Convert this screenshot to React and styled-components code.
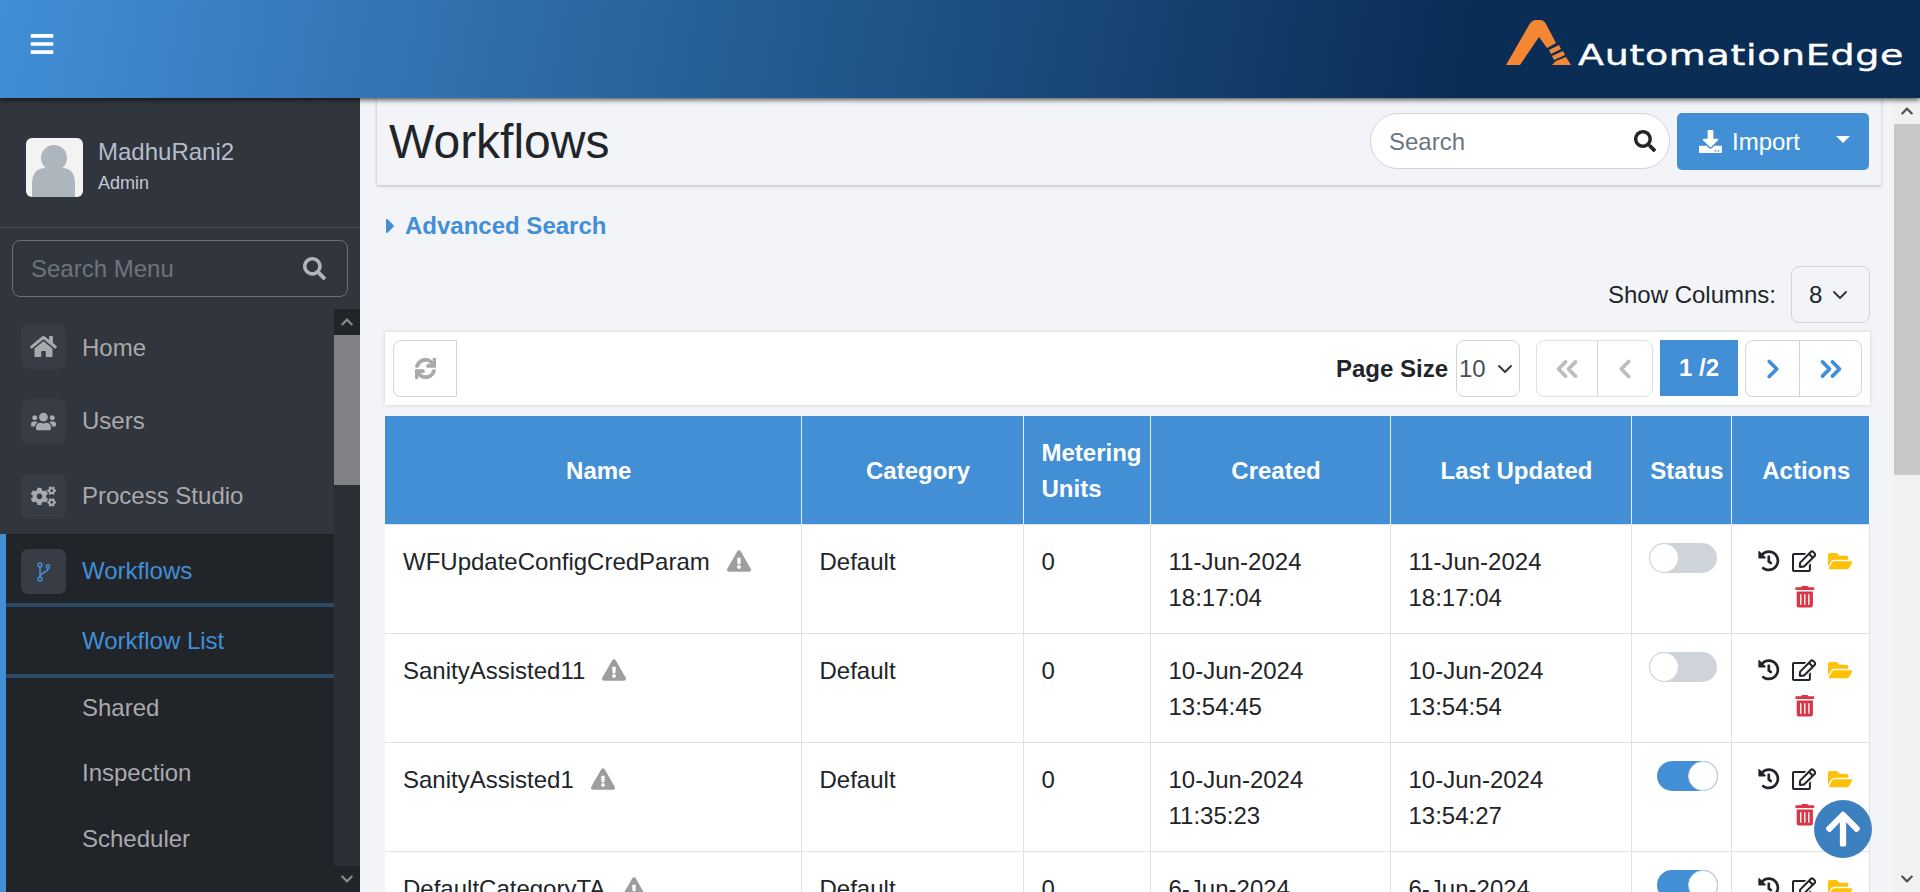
import React from "react"
import styled, { createGlobalStyle } from "styled-components"
import {
  FaBars,
  FaHome,
  FaUsers,
  FaCogs,
  FaSearch,
  FaDownload,
  FaCaretRight,
  FaSync,
  FaExclamationTriangle,
  FaHistory,
  FaRegEdit,
  FaFolderOpen,
  FaTrashAlt,
  FaArrowUp,
  FaChevronUp,
  FaChevronDown,
} from "react-icons/fa"
import {
  ChevronLeft,
  ChevronRight,
  ChevronsLeft,
  ChevronsRight,
} from "lucide-react"

const BLUE = "#428fd6"
const INK = "#212529"

const chevron = encodeURIComponent(
  '<svg xmlns="http://www.w3.org/2000/svg" viewBox="0 0 16 16"><path fill="none" stroke="#343a40" stroke-linecap="round" stroke-linejoin="round" stroke-width="2" d="M2 5l6 6 6-6"/></svg>'
)

const GlobalStyle = createGlobalStyle`
  html, body {
    margin: 0;
    height: 100%;
    overflow: hidden;
    background: #f2f4f8;
    font-family: "Liberation Sans", Arial, sans-serif;
    font-size: 24px;
    line-height: 36px;
    color: ${INK};
  }
  * { box-sizing: border-box; }
`

// page frame
const Page = styled.div`
  height: 100vh;
  display: flex;
  flex-direction: column;
  overflow: hidden;
  position: relative;
`
const Header = styled.header`
  height: 98px;
  flex: none;
  display: flex;
  align-items: center;
  justify-content: space-between;
  padding: 0 16px 10px 29px;
  background: linear-gradient(100deg, #428fd6 0%, #0a2d55 76%);
  box-shadow: 0 2px 5px rgba(0, 0, 0, 0.65);
  position: relative;
  z-index: 2;
  color: #fff;
`
const Logo = styled.div`
  align-self: flex-start;
  display: flex;
  align-items: flex-start;
  gap: 7px;
  padding-top: 20px;
`
const LogoText = styled.span`
  display: block;
  width: 326px;
  margin-top: 19px;
  font-family: "DejaVu Sans", sans-serif;
  font-size: 29px;
  line-height: 32px;
  letter-spacing: 0.5px;
  white-space: nowrap;
  -webkit-text-stroke: 0.4px #fff;
  transform: scaleX(1.31);
  transform-origin: left center;
`
const Body = styled.div`
  flex: 1;
  min-height: 0;
  display: flex;
`

// sidebar
const Sidebar = styled.aside`
  width: 360px;
  flex: none;
  background: #31353d;
  display: flex;
  flex-direction: column;
`
const UserBlock = styled.div`
  height: 130px;
  flex: none;
  display: flex;
  align-items: flex-start;
  gap: 15px;
  padding: 40px 0 0 26px;
  border-bottom: 1px solid #444851;
`
const Avatar = styled.div`
  width: 57px;
  height: 59px;
  border-radius: 6px;
  background: #f3f3f3;
  overflow: hidden;
  svg {
    display: block;
  }
`
const UserName = styled.div`
  color: #b6bdcb;
  line-height: 28px;
`
const UserRole = styled.div`
  color: #c3c9d4;
  font-size: 18px;
  line-height: 28px;
  margin-top: 3px;
`
const MenuSearch = styled.div`
  height: 57px;
  flex: none;
  margin: 12px;
  padding: 0 21px 0 18px;
  display: flex;
  align-items: center;
  justify-content: space-between;
  border: 1px solid #6c7075;
  border-radius: 8px;
  color: #6c757d;
  svg {
    color: #adb5bd;
    font-size: 23px;
  }
`
const MenuWrap = styled.div`
  flex: 1;
  min-height: 0;
  display: flex;
`
const Menu = styled.nav`
  flex: 1;
  overflow: hidden;
`
const MenuItem = styled.div`
  height: ${p => (p.$active ? 69 : 75)}px;
  display: flex;
  align-items: flex-start;
  gap: 16px;
  padding: 15px 0 0 ${p => (p.$active ? 15 : 21)}px;
  color: ${p => (p.$active ? BLUE : "#a8aaad")};
`
const MenuIcon = styled.span`
  width: 45px;
  height: 45px;
  flex: none;
  display: flex;
  align-items: center;
  justify-content: center;
  border-radius: 7px;
  background: #383c45;
`
const MenuLabel = styled.span`
  line-height: 43px;
  padding-top: ${p => p.$nudge || 0}px;
`
const OpenGroup = styled.div`
  background: #212429;
  border-left: 6px solid ${BLUE};
  height: 400px;
`
const SubItem = styled.div`
  height: ${p => (p.$current ? 67 : 65.5)}px;
  padding: 0 0 ${p => (p.$current ? 0 : 6)}px 76px;
  display: flex;
  align-items: center;
  color: ${p => (p.$current ? BLUE : "#a8aaad")};
`
const Rule = styled.div`
  height: 4px;
  background: #2b4a66;
`

// fake scrollbars, the screenshot shows them as plain stacked parts
const ScrollBar = styled.div`
  width: 26px;
  flex: none;
  display: flex;
  flex-direction: column;
  background: ${p => (p.$dark ? "#2c2f36" : "#f1f1f1")};
`
const ScrollArrow = styled.div`
  height: 26px;
  flex: none;
  display: flex;
  align-items: center;
  justify-content: center;
  font-size: 14px;
  background: ${p => (p.$dark ? "#212429" : "#f1f1f1")};
  color: ${p => (p.$dark ? "#8a8a8a" : "#505050")};
`
const ScrollThumb = styled.div`
  height: ${p => p.$size}px;
  flex: none;
  background: ${p => (p.$dark ? "#808184" : "#c8c8c8")};
`
const ScrollGap = styled.div`
  flex: 1;
`

// main column
const Main = styled.main`
  flex: 1;
  min-width: 0;
  overflow: hidden;
  padding: 0 13px 0 17px;
`
const TitleBar = styled.div`
  height: 87px;
  display: flex;
  align-items: center;
  justify-content: space-between;
  padding: 0 12px;
  box-shadow: 0 1px 3px rgba(0, 0, 0, 0.25);
`
const Title = styled.h1`
  margin: 0;
  font-size: 48px;
  font-weight: 400;
  line-height: 58px;
`
const TitleActions = styled.div`
  display: flex;
  gap: 7px;
`
const SearchPill = styled.div`
  width: 300px;
  height: 56px;
  display: flex;
  align-items: center;
  padding: 0 13px 0 18px;
  background: #fff;
  border: 1px solid #ced4da;
  border-radius: 28px;
  svg {
    font-size: 22px;
    flex: none;
  }
`
const SearchInput = styled.input`
  flex: 1;
  min-width: 0;
  border: 0;
  outline: 0;
  padding: 1px 0 0;
  background: none;
  font: inherit;
  color: ${INK};
  &::placeholder {
    color: #6c757d;
    opacity: 1;
  }
`
const ImportButton = styled.button`
  width: 192px;
  height: 57px;
  display: flex;
  align-items: center;
  padding: 0 19px 0 22px;
  border: 0;
  border-radius: 5px;
  background: ${BLUE};
  color: #fff;
  font: inherit;
  svg {
    font-size: 23px;
    margin-right: 10px;
  }
`
const Caret = styled.span`
  margin-left: auto;
  border-left: 7px solid transparent;
  border-right: 7px solid transparent;
  border-top: 7px solid #fff;
  margin-bottom: 4px;
`
const Content = styled.div`
  padding: 0 11px 0 8px;
`
const AdvancedSearch = styled.div`
  height: 81px;
  padding-top: 23px;
  display: flex;
  align-items: flex-start;
  gap: 7px;
  color: ${BLUE};
  font-weight: 700;
  svg {
    font-size: 24px;
    margin: 6px 0 0 -2px;
    width: 15px;
  }
`
const ColumnsRow = styled.div`
  display: flex;
  justify-content: flex-end;
  align-items: center;
  gap: 15px;
  margin-bottom: 9px;
`
const Select = styled.select`
  appearance: none;
  width: ${p => p.$width}px;
  height: 57px;
  padding: 0 ${p => p.$pad}px;
  font: inherit;
  font-weight: 400;
  color: ${p => p.$color || INK};
  background-color: ${p => p.$bg || "transparent"};
  background-image: url("data:image/svg+xml,${chevron}");
  background-repeat: no-repeat;
  background-size: 16px 16px;
  background-position: right ${p => p.$arrow}px center;
  border: 1px solid #ced4da;
  border-radius: 8px;
  outline: 0;
`
const Toolbar = styled.div`
  height: 73px;
  display: flex;
  align-items: center;
  padding: 0 8px;
  margin-bottom: 11px;
  background: #fff;
  box-shadow: 0 0 4px rgba(0, 0, 0, 0.15);
`
const RefreshButton = styled.div`
  width: 64px;
  height: 57px;
  display: flex;
  align-items: center;
  justify-content: center;
  border: 1px solid #ced4da;
  border-radius: 8px 0 0 8px;
  color: #a9a9a9;
  font-size: 21px;
  svg {
    stroke: currentColor;
    stroke-width: 24px;
  }
`
const PageSize = styled.div`
  margin-left: auto;
  display: flex;
  align-items: center;
  gap: 8px;
  font-weight: 700;
`
const Pager = styled.div`
  display: flex;
  gap: 7px;
  margin-left: 16px;
`
const PagerGroup = styled.div`
  display: flex;
  height: 57px;
  border: 1px solid ${p => (p.$off ? "#dee2e6" : "#ced4da")};
  border-radius: 8px;
  overflow: hidden;
`
const PagerCell = styled.div`
  width: ${p => p.$width}px;
  display: flex;
  align-items: center;
  justify-content: center;
  color: ${p => (p.$off ? "#bdbdbd" : BLUE)};
  & + & {
    border-left: 1px solid ${p => (p.$off ? "#dee2e6" : "#ced4da")};
  }
`
const PagerCurrent = styled.div`
  width: 78px;
  height: 56px;
  display: flex;
  align-items: center;
  justify-content: center;
  background: ${BLUE};
  color: #fff;
  font-weight: 700;
`

// table
const Table = styled.table`
  width: 1484px;
  table-layout: fixed;
  border-collapse: collapse;
  background: #fff;
`
const Th = styled.th`
  height: 108px;
  padding: 19px 6px 17px 18px;
  background: ${BLUE};
  color: #fff;
  font-weight: 700;
  text-align: ${p => (p.$left ? "left" : "center")};
  vertical-align: middle;
  border-left: 1px solid #e6eef7;
  &:first-child {
    border-left: 0;
  }
`
const Td = styled.td`
  height: 109px;
  padding: ${p => (p.$tight ? "18px 12px 18px 22px" : "19px 18px 17px")};
  vertical-align: top;
  border: 1px solid #dee2e6;
  &:first-child {
    border-left: 0;
  }
`
const NameCell = styled.div`
  display: flex;
  align-items: center;
  gap: 17px;
  white-space: nowrap;
  svg {
    color: #9e9e9e;
    margin-top: -2px;
  }
`
const Toggle = styled.div`
  width: ${p => (p.$on ? 61 : 68)}px;
  height: 30px;
  margin: -1px 0 0 ${p => (p.$on ? 7 : -1)}px;
  display: flex;
  justify-content: ${p => (p.$on ? "flex-end" : "flex-start")};
  border-radius: 15px;
  background: ${p => (p.$on ? BLUE : "#ced4da")};
`
const Knob = styled.span`
  width: 30px;
  height: 30px;
  border-radius: 50%;
  background: #fff;
  border: 1px solid #ced4da;
`
const Actions = styled.div`
  display: flex;
  flex-wrap: wrap;
  justify-content: center;
  column-gap: 12px;
`
const ActionIcon = styled.span`
  height: 36px;
  display: flex;
  align-items: center;
  color: ${p => p.$color || INK};
`
const BackToTop = styled.div`
  position: absolute;
  right: 48px;
  bottom: 34px;
  width: 58px;
  height: 58px;
  display: flex;
  align-items: center;
  justify-content: center;
  border-radius: 50%;
  background: #3d80bf;
  color: #fff;
  font-size: 40px;
  z-index: 3;
`

const LogoMark = () => (
  <svg width="65" height="45" viewBox="0 0 65 45">
    <path
      d="M0 45 L23 5 Q26 0 30 0 H34 Q38 0 40 4 L50 23 L41 28 L33 17 L14 45 Z"
      fill="#f58634"
    />
    <path d="M43 30 L53 25 L55 29 L45 34 Z" fill="#f58634" />
    <path d="M46 36 L57 31 L59 35 L48 40 Z" fill="#f58634" />
    <path d="M50 41 L60 37 L65 45 H46 Z" fill="#f58634" />
  </svg>
)

const AvatarFigure = () => (
  <svg width="57" height="59" viewBox="0 0 57 59">
    <circle cx="28" cy="20" r="13" fill="#adb5bd" />
    <path
      d="M6 59 V46 Q6 30 20 30 Q28 36 36 30 Q49 30 49 46 V59 Z"
      fill="#adb5bd"
    />
  </svg>
)

const BranchIcon = () => (
  <svg
    width="13"
    height="20"
    viewBox="0 0 13 20"
    fill="none"
    stroke="currentColor"
    strokeWidth="1.5"
  >
    <circle cx="3" cy="3" r="1.9" />
    <circle cx="3" cy="17" r="1.9" />
    <circle cx="11" cy="4.5" r="1.7" />
    <path d="M3 5 V15" />
    <path d="M11 6.5 C11 11 3.5 9.5 3 15" />
  </svg>
)

const rows = [
  {
    name: "WFUpdateConfigCredParam",
    created: "11-Jun-2024 18:17:04",
    updated: "11-Jun-2024 18:17:04",
    on: false,
  },
  {
    name: "SanityAssisted11",
    created: "10-Jun-2024 13:54:45",
    updated: "10-Jun-2024 13:54:54",
    on: false,
  },
  {
    name: "SanityAssisted1",
    created: "10-Jun-2024 11:35:23",
    updated: "10-Jun-2024 13:54:27",
    on: true,
  },
  {
    name: "DefaultCategoryTA",
    created: "6-Jun-2024 16:02:11",
    updated: "6-Jun-2024 16:02:11",
    on: true,
  },
]

const columnWidths = [416, 222, 127, 240, 241, 100, 138]

export default function App() {
  return (
    <Page>
      <GlobalStyle />
      <Header>
        <FaBars size={26} />
        <Logo>
          <LogoMark />
          <LogoText>AutomationEdge</LogoText>
        </Logo>
      </Header>
      <Body>
        <Sidebar>
          <UserBlock>
            <Avatar>
              <AvatarFigure />
            </Avatar>
            <div>
              <UserName>MadhuRani2</UserName>
              <UserRole>Admin</UserRole>
            </div>
          </UserBlock>
          <MenuSearch>
            Search Menu
            <FaSearch />
          </MenuSearch>
          <MenuWrap>
            <Menu>
              <MenuItem>
                <MenuIcon>
                  <FaHome size={27} />
                </MenuIcon>
                <MenuLabel $nudge={2}>Home</MenuLabel>
              </MenuItem>
              <MenuItem>
                <MenuIcon>
                  <FaUsers size={25} />
                </MenuIcon>
                <MenuLabel>Users</MenuLabel>
              </MenuItem>
              <MenuItem>
                <MenuIcon>
                  <FaCogs size={25} />
                </MenuIcon>
                <MenuLabel>Process Studio</MenuLabel>
              </MenuItem>
              <OpenGroup>
                <MenuItem $active>
                  <MenuIcon>
                    <BranchIcon />
                  </MenuIcon>
                  <MenuLabel>Workflows</MenuLabel>
                </MenuItem>
                <Rule />
                <SubItem $current>Workflow List</SubItem>
                <Rule />
                <SubItem>Shared</SubItem>
                <SubItem>Inspection</SubItem>
                <SubItem>Scheduler</SubItem>
              </OpenGroup>
            </Menu>
            <ScrollBar $dark>
              <ScrollArrow $dark>
                <FaChevronUp />
              </ScrollArrow>
              <ScrollThumb $dark $size={150} />
              <ScrollGap />
              <ScrollArrow $dark>
                <FaChevronDown />
              </ScrollArrow>
            </ScrollBar>
          </MenuWrap>
        </Sidebar>
        <Main>
          <TitleBar>
            <Title>Workflows</Title>
            <TitleActions>
              <SearchPill>
                <SearchInput placeholder="Search" />
                <FaSearch />
              </SearchPill>
              <ImportButton>
                <FaDownload />
                Import
                <Caret />
              </ImportButton>
            </TitleActions>
          </TitleBar>
          <Content>
            <AdvancedSearch>
              <FaCaretRight />
              Advanced Search
            </AdvancedSearch>
            <ColumnsRow>
              Show Columns:
              <Select $width={79} $pad={17} $arrow={21}>
                <option>8</option>
              </Select>
            </ColumnsRow>
            <Toolbar>
              <RefreshButton>
                <FaSync />
              </RefreshButton>
              <PageSize>
                Page Size
                <Select $width={64} $pad={2} $arrow={6} $color="#495057" $bg="#fff">
                  <option>10</option>
                </Select>
              </PageSize>
              <Pager>
                <PagerGroup $off>
                  <PagerCell $off $width={60}>
                    <ChevronsLeft size={34} strokeWidth={2.6} />
                  </PagerCell>
                  <PagerCell $off $width={55}>
                    <ChevronLeft size={30} strokeWidth={3} />
                  </PagerCell>
                </PagerGroup>
                <PagerCurrent>1 /2</PagerCurrent>
                <PagerGroup>
                  <PagerCell $width={53}>
                    <ChevronRight size={30} strokeWidth={3} />
                  </PagerCell>
                  <PagerCell $width={62}>
                    <ChevronsRight size={34} strokeWidth={2.6} />
                  </PagerCell>
                </PagerGroup>
              </Pager>
            </Toolbar>
            <Table>
              <colgroup>
                {columnWidths.map((w, i) => (
                  <col key={i} width={w} />
                ))}
              </colgroup>
              <thead>
                <tr>
                  <Th>Name</Th>
                  <Th>Category</Th>
                  <Th $left>Metering Units</Th>
                  <Th>Created</Th>
                  <Th>Last Updated</Th>
                  <Th>Status</Th>
                  <Th>Actions</Th>
                </tr>
              </thead>
              <tbody>
                {rows.map(row => (
                  <tr key={row.name}>
                    <Td>
                      <NameCell>
                        {row.name}
                        <FaExclamationTriangle size={24} />
                      </NameCell>
                    </Td>
                    <Td>Default</Td>
                    <Td>0</Td>
                    <Td>{row.created}</Td>
                    <Td>{row.updated}</Td>
                    <Td>
                      <Toggle $on={row.on}>
                        <Knob />
                      </Toggle>
                    </Td>
                    <Td $tight>
                      <Actions>
                        <ActionIcon>
                          <FaHistory size={21.6} />
                        </ActionIcon>
                        <ActionIcon>
                          <FaRegEdit size={24.3} />
                        </ActionIcon>
                        <ActionIcon $color="#ffc107">
                          <FaFolderOpen size={24.3} />
                        </ActionIcon>
                        <ActionIcon $color="#dc3545">
                          <FaTrashAlt size={21.6} />
                        </ActionIcon>
                      </Actions>
                    </Td>
                  </tr>
                ))}
              </tbody>
            </Table>
          </Content>
        </Main>
        <ScrollBar>
          <ScrollArrow>
            <FaChevronUp />
          </ScrollArrow>
          <ScrollThumb $size={351} />
          <ScrollGap />
          <ScrollArrow>
            <FaChevronDown />
          </ScrollArrow>
        </ScrollBar>
      </Body>
      <BackToTop>
        <FaArrowUp />
      </BackToTop>
    </Page>
  )
}
